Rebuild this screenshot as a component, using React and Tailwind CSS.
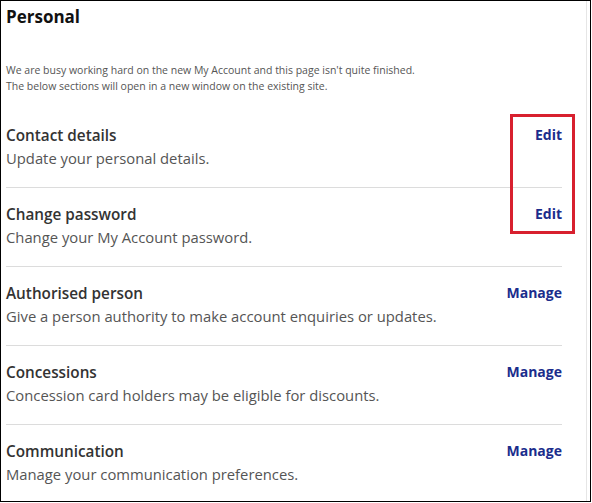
import React from 'react';

const rows = [
  { title: 'Contact details', desc: 'Update your personal details.', action: 'Edit' },
  { title: 'Change password', desc: 'Change your My Account password.', action: 'Edit' },
  { title: 'Authorised person', desc: 'Give a person authority to make account enquiries or updates.', action: 'Manage' },
  { title: 'Concessions', desc: 'Concession card holders may be eligible for discounts.', action: 'Manage' },
  { title: 'Communication', desc: 'Manage your communication preferences.', action: 'Manage' },
];

export default function App() {
  return (
    <div
      className="relative w-[592px] h-[503px] bg-white overflow-hidden"
      style={{ fontFamily: '"Open Sans", "Noto Sans", sans-serif' }}
    >
      <div className="h-[502px] w-[591px] border border-black">
        <div className="h-full border-r border-[#e6e6e6] mr-[3px] pl-[5px] pr-[24px]">
          {/* Header */}
          <h1 className="pt-[5px] text-[17px] leading-[22px] font-bold text-[#111]">Personal</h1>
          <div className="mt-[34px] text-[10.5px] leading-[16px] text-[#555]">
            <p>We are busy working hard on the new My Account and this page isn't quite finished.</p>
            <p>The below sections will open in a new window on the existing site.</p>
          </div>

          {/* Sections */}
          <div className="mt-[15px]">
            {rows.map((row, i) => (
              <div
                key={row.title}
                className={`flex justify-between items-start pt-[14px] pb-[18px] ${i < rows.length - 1 ? 'border-b border-[#dcdcdc]' : ''}`}
              >
                <div>
                  <div className="text-[15.3px] leading-[24px] font-semibold text-[#333]">{row.title}</div>
                  <div className="text-[14.8px] leading-[22px] text-[#555]">{row.desc}</div>
                </div>
                <a className="text-[14px] leading-[24px] font-bold text-[#1b2d8c]">{row.action}</a>
              </div>
            ))}
          </div>
        </div>
      </div>

      {/* Annotation box */}
      <div className="absolute left-[510px] top-[114px] w-[65px] h-[120px] border-[3px] border-[#d8202f]" />
    </div>
  );
}
